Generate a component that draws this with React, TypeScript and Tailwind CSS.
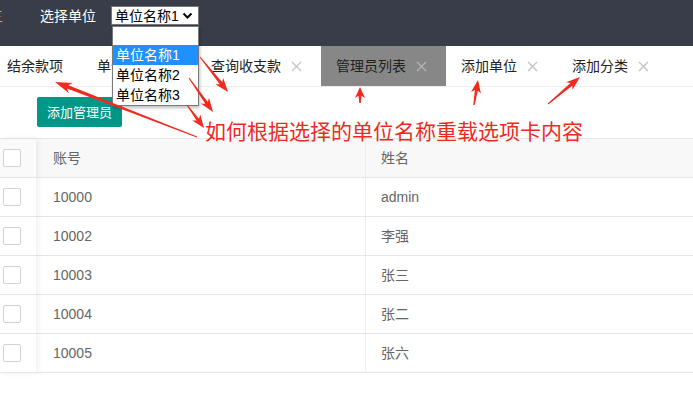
import React from "react";

const FONT = { fontFamily: '"Liberation Sans", "Noto Sans CJK SC", Arial, sans-serif' };

function arrowPoints(
  x1: number, y1: number, x2: number, y2: number,
  tw: number, sw: number, hl: number, hw: number
) {
  const dx = x2 - x1, dy = y2 - y1;
  const len = Math.hypot(dx, dy);
  const ux = dx / len, uy = dy / len;
  const px = -uy, py = ux;
  const bx = x2 - ux * hl, by = y2 - uy * hl;
  const nx = x2 - ux * hl * 0.8, ny = y2 - uy * hl * 0.8;
  const pts: [number, number][] = [
    [x1 + (px * tw) / 2, y1 + (py * tw) / 2],
    [nx + (px * sw) / 2, ny + (py * sw) / 2],
    [bx + (px * hw) / 2, by + (py * hw) / 2],
    [x2, y2],
    [bx - (px * hw) / 2, by - (py * hw) / 2],
    [nx - (px * sw) / 2, ny - (py * sw) / 2],
    [x1 - (px * tw) / 2, y1 - (py * tw) / 2],
  ];
  return pts.map((p) => p.map((v) => v.toFixed(1)).join(",")).join(" ");
}

const arrows: [number, number, number, number, number, number, number, number][] = [
  [197, 137, 55, 82, 1, 3.5, 17, 11],
  [200, 57, 228, 92, 1, 3, 14, 10],
  [189, 78, 213, 112, 1, 3, 14, 10],
  [187, 105, 204, 128, 1, 3, 13, 10],
  [360, 103, 360, 87, 1.5, 3, 11, 10],
  [474, 105, 478, 80, 1.5, 3, 13, 10],
  [548, 104, 580, 77, 1, 3, 14, 10],
];

function Tab({ label, close = true, active = false, first = false, wide = false }: { label: string; close?: boolean; active?: boolean; first?: boolean; wide?: boolean }) {
  return (
    <div
      className={
        "flex items-center h-full pl-[15px] shrink-0 " +
        (wide ? "pr-[22px] " : "pr-[19px] ") +
        (active ? "bg-[#878787] " : "") +
        (first ? "-ml-[8px]" : "")
      }
    >
      <span className="text-[14px] text-[#222] leading-none">{label}</span>
      {close && (
        <svg width="11" height="11" viewBox="0 0 11 11" className="ml-[10px]">
          <path d="M1 1L10 10M10 1L1 10" stroke={active ? "#b5b5b5" : "#c2c2c2"} strokeWidth="1.2" />
        </svg>
      )}
    </div>
  );
}

const rows = [
  ["10000", "admin"],
  ["10002", "李强"],
  ["10003", "张三"],
  ["10004", "张二"],
  ["10005", "张六"],
];

function CheckBox() {
  return <div className="w-[18px] h-[18px] border border-[#d2d2d2] rounded-[2px] bg-white ml-[3px]" />;
}

export default function App() {
  return (
    <div className="relative w-[693px] h-[394px] overflow-hidden bg-white" style={FONT}>
      {/* Top bar */}
      <div className="h-[46px] bg-[#393D49] flex items-start pt-[6px]">
        <span className="-ml-[11px] mt-[1px] text-[14px] leading-[19px] text-[#c9a57a]">三</span>
        <span className="ml-[37px] mt-[1px] text-[14px] leading-[19px] text-white">选择单位</span>
        <div className="ml-[15px] w-[88px] h-[19px] bg-white border border-[#767676] flex items-center pl-[3px]">
          <span className="text-[14px] leading-none text-black">单位名称1</span>
          <svg width="11" height="8" viewBox="0 0 11 8" className="ml-[3px]">
            <path d="M1.5 1.5L5.5 5.5L9.5 1.5" stroke="#000" strokeWidth="2" fill="none" />
          </svg>
        </div>
      </div>

      {/* Tab bar */}
      <div className="h-[41px] border-b border-[#eeeeee] flex items-stretch">
        <Tab label="结余款项" close={false} first />
        <Tab label="单位收支" wide />
        <Tab label="查询收支款" />
        <Tab label="管理员列表" active />
        <Tab label="添加单位" />
        <Tab label="添加分类" />
      </div>

      {/* Button row */}
      <div className="pt-[10px] pl-[37px] pb-[11px]">
        <button className="h-[30px] px-[10px] bg-[#009688] text-white text-[13px] rounded-[2px] leading-none">
          添加管理员
        </button>
      </div>

      {/* Table */}
      <div className="flex border-t border-[#e6e6e6]">
        <div className="w-[36px] relative z-10 bg-white shadow-[2px_0_6px_rgba(0,0,0,0.07)]">
          <div className="h-[39px] border-b border-[#e6e6e6] bg-[#fafafa] flex items-center">
            <CheckBox />
          </div>
          {rows.map((r) => (
            <div key={r[0]} className="h-[39px] border-b border-[#e6e6e6] flex items-center">
              <CheckBox />
            </div>
          ))}
        </div>
        <div className="flex-1">
          <div className="h-[39px] border-b border-[#e6e6e6] bg-[#f8f8f8] grid grid-cols-[330px_1fr] text-[14px] text-[#666]">
            <div className="flex items-center pl-[17px] border-r border-[#eeeeee]">账号</div>
            <div className="flex items-center pl-[15px]">姓名</div>
          </div>
          {rows.map((r) => (
            <div key={r[0]} className="h-[39px] border-b border-[#e6e6e6] grid grid-cols-[330px_1fr] text-[14px] text-[#666]">
              <div className="flex items-center pl-[17px] border-r border-[#eeeeee]">{r[0]}</div>
              <div className="flex items-center pl-[15px]">{r[1]}</div>
            </div>
          ))}
        </div>
      </div>

      {/* Native select dropdown (open) */}
      <div className="absolute left-[112px] top-[26px] w-[87px] bg-white border border-[#7a7a7a] shadow-[1px_2px_3px_rgba(0,0,0,0.25)] z-20 text-[14px] text-black">
        <div className="h-[18px]" />
        <div className="h-[20px] bg-[#1e90ff] text-white flex items-center pl-[3px]">单位名称1</div>
        <div className="h-[20px] flex items-center pl-[3px]">单位名称2</div>
        <div className="h-[20px] flex items-center pl-[3px]">单位名称3</div>
      </div>

      {/* Annotation overlay */}
      <svg className="absolute left-0 top-0 z-30 pointer-events-none" width="693" height="394" viewBox="0 0 693 394">
        {arrows.map((a, i) => (
          <polygon key={i} points={arrowPoints(...a)} fill="#f02a1e" />
        ))}
      </svg>
      <div
        className="absolute left-[205px] top-[118px] z-30 text-[21px] leading-[24px] text-[#ee2a1e] whitespace-nowrap"
        style={{ fontFamily: '"Noto Sans CJK SC", sans-serif' }}
      >
        如何根据选择的单位名称重载选项卡内容
      </div>
    </div>
  );
}
